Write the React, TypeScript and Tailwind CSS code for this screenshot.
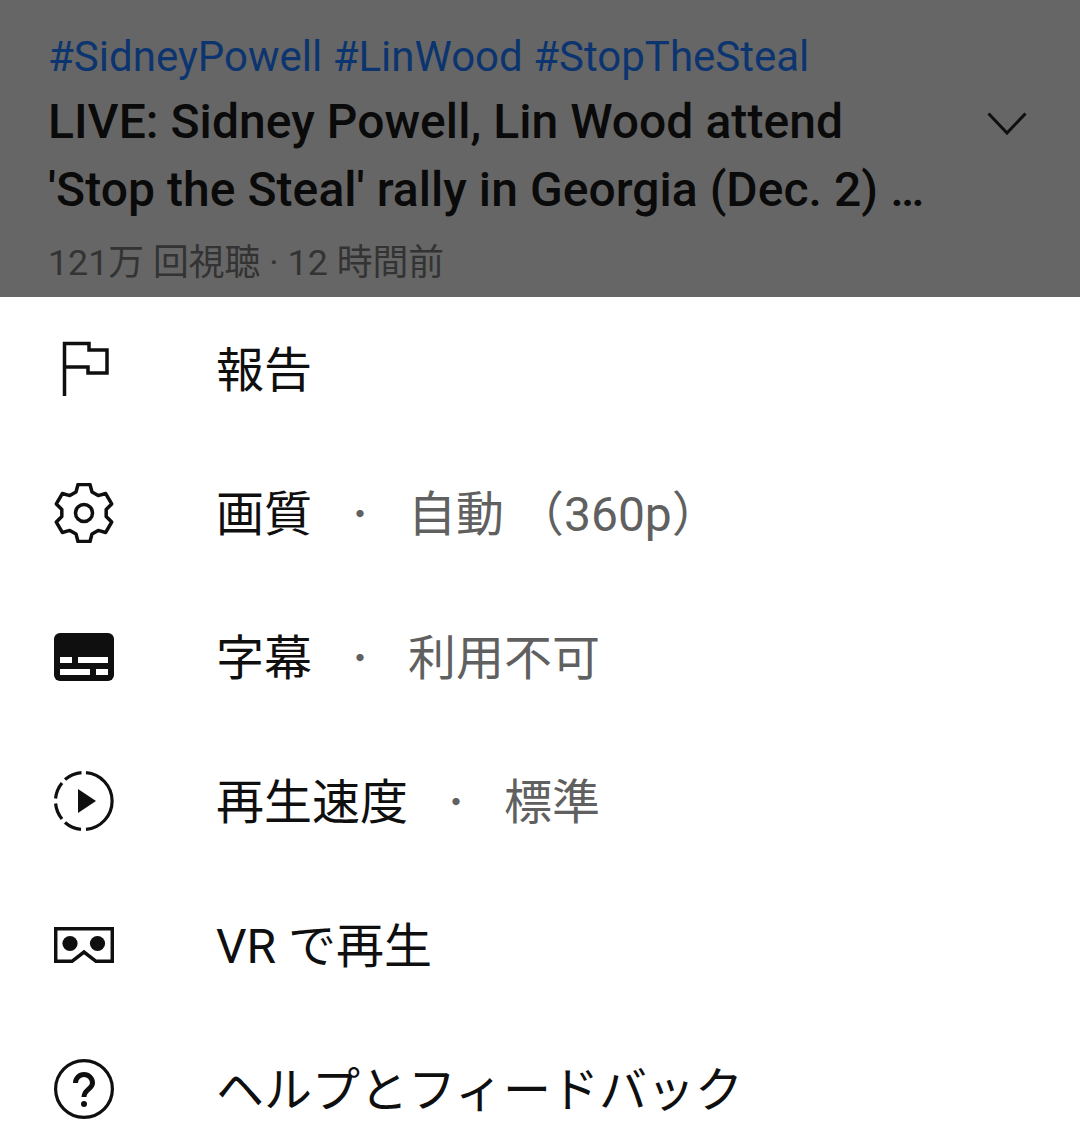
import type { ReactNode } from 'react'

const font = { fontFamily: 'Roboto, "Noto Sans CJK JP", sans-serif' }

// six teeth, written out once and rotated
const tooth = [
  [-8, -21],
  [-6, -28.5],
  [6, -28.5],
  [8, -21],
]
const gearPath =
  [0, 1, 2, 3, 4, 5]
    .flatMap((i) => {
      const a = (i * Math.PI) / 3
      return tooth.map(([x, y]) => {
        const px = 30 + x * Math.cos(a) - y * Math.sin(a)
        const py = 30 + x * Math.sin(a) + y * Math.cos(a)
        return `${px.toFixed(2)} ${py.toFixed(2)}`
      })
    })
    .reduce((d, p, i) => d + (i ? ' L' : 'M') + p, '') + ' Z'

function FlagIcon() {
  return (
    <svg width="60" height="60" viewBox="0 0 60 60" fill="none" stroke="#0f0f0f" strokeWidth="3.5">
      <path d="M10.5 57V4.5H35V11H53V34H34V28H10.5" />
    </svg>
  )
}

function GearIcon() {
  return (
    <svg width="60" height="60" viewBox="0 0 60 60" fill="none" stroke="#0f0f0f" strokeWidth="3.5" strokeLinejoin="round">
      <path d={gearPath} />
      <circle cx="30" cy="30" r="8.5" />
    </svg>
  )
}

function CaptionIcon() {
  return (
    <svg width="60" height="48" viewBox="0 0 60 48">
      <rect width="60" height="48" rx="6" fill="#0f0f0f" />
      <path d="M6 24h12v6H6zM24 24h30v6H24zM6 36h30v6H6zM42 36h12v6H42z" fill="#fff" />
    </svg>
  )
}

function SpeedIcon() {
  return (
    <svg width="60" height="60" viewBox="0 0 60 60" fill="none" stroke="#0f0f0f" strokeWidth="3.2">
      <path d="M32 1.6A28.5 28.5 0 0 1 32 58.4" />
      <path d="M27 58.4A28.5 28.5 0 0 1 11 51.5" />
      <path d="M8 48A28.5 28.5 0 0 1 1.6 32.5" />
      <path d="M1.6 27.5A28.5 28.5 0 0 1 8 12" />
      <path d="M11 8.5A28.5 28.5 0 0 1 27.5 1.6" />
      <path d="M24 18V42L42 30Z" fill="#0f0f0f" stroke="none" />
    </svg>
  )
}

function VrIcon() {
  return (
    <svg width="60" height="36" viewBox="0 0 60 36" fill="none" stroke="#0f0f0f" strokeWidth="3.5">
      <path d="M1.7 1.7H58.3V34.3H42L30 25L18 34.3H1.7Z" />
      <circle cx="16" cy="16.5" r="7.6" fill="#0f0f0f" stroke="none" />
      <circle cx="43.5" cy="16.5" r="7.6" fill="#0f0f0f" stroke="none" />
    </svg>
  )
}

function HelpIcon() {
  return (
    <svg width="60" height="60" viewBox="0 0 60 60" fill="none" stroke="#0f0f0f" strokeWidth="3.2">
      <circle cx="30" cy="30" r="28.4" />
      <path d="M21.5 24A8.5 8.5 0 0 1 38.5 24C38.5 30 30 30.5 30 38" strokeWidth="5" />
      <circle cx="30" cy="45" r="3" fill="#0f0f0f" stroke="none" />
    </svg>
  )
}

const rows: { icon: ReactNode; label: string; value?: string }[] = [
  { icon: <FlagIcon />, label: '報告' },
  { icon: <GearIcon />, label: '画質', value: '自動 （360p）' },
  { icon: <CaptionIcon />, label: '字幕', value: '利用不可' },
  { icon: <SpeedIcon />, label: '再生速度', value: '標準' },
  { icon: <VrIcon />, label: 'VR で再生' },
  { icon: <HelpIcon />, label: 'ヘルプとフィードバック' },
]

export default function App() {
  return (
    <div className="h-[1142px] w-[1080px] overflow-hidden bg-white" style={font}>
      <header className="relative h-[297px] bg-[#666666] pl-[48px] pt-[31px]">
        <p className="text-[42px] leading-[52px] text-[#0c3570]">#SidneyPowell #LinWood #StopTheSteal</p>
        <h1 className="mt-[5px] text-[48px] font-medium leading-[68px] tracking-[0.05px] text-[#0a0a0a]">
          LIVE: Sidney Powell, Lin Wood attend
          <br />
          'Stop the Steal' rally in Georgia (Dec. 2) …
        </h1>
        <p className="mt-[17px] text-[35.8px] leading-[44px] text-[#333333]">121万 回視聴 · 12 時間前</p>
        <svg className="absolute left-[987px] top-[112px]" width="40" height="23" viewBox="0 0 40 23" fill="none" stroke="#0f0f0f" strokeWidth="3">
          <path d="M1.5 1.5L20 21L38.5 1.5" />
        </svg>
      </header>
      <ul>
        {rows.map(({ icon, label, value }) => (
          <li key={label} className="flex h-[144px] items-center pl-[54px]">
            <span className="flex w-[162px] shrink-0">{icon}</span>
            <span className="mt-[4px] text-[48px] leading-none text-[#0f0f0f]">{label}</span>
            {value && (
              <>
                <span className="ml-[24px] mt-[4px] w-[48px] text-center text-[34px] leading-none text-[#606060]">・</span>
                <span className="ml-[24px] mt-[4px] text-[48px] leading-none text-[#606060]">{value}</span>
              </>
            )}
          </li>
        ))}
      </ul>
    </div>
  )
}
